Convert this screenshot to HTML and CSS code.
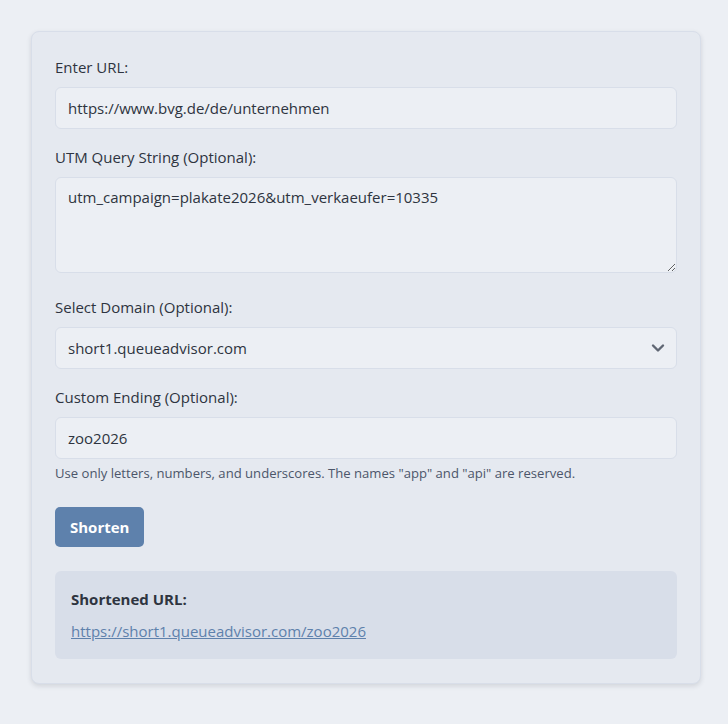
FILE: index.html
```html
<!DOCTYPE html>
<html lang="en">
<head>
<meta charset="utf-8">
<title>URL Shortener</title>
<link rel="stylesheet" href="styles.css">
</head>
<body>
<main class="card">
  <form class="form" onsubmit="return false">
    <label class="label" for="url">Enter URL:</label>
    <input class="field" id="url" type="text" value="https://www.bvg.de/de/unternehmen">

    <label class="label" for="utm">UTM Query String (Optional):</label>
    <textarea class="field area" id="utm">utm_campaign=plakate2026&amp;utm_verkaeufer=10335</textarea>

    <label class="label" for="domain">Select Domain (Optional):</label>
    <div class="select-wrap">
      <select class="field select" id="domain">
        <option>short1.queueadvisor.com</option>
      </select>
      <svg class="chevron" width="14" height="10" viewBox="0 0 14 10" aria-hidden="true"><path d="M2 2.5 L7 7.5 L12 2.5" fill="none" stroke="#5f6673" stroke-width="2.4" stroke-linecap="round" stroke-linejoin="round"/></svg>
    </div>

    <label class="label" for="ending">Custom Ending (Optional):</label>
    <input class="field" id="ending" type="text" value="zoo2026">
    <p class="help">Use only letters, numbers, and underscores. The names "app" and "api" are reserved.</p>

    <button class="btn" type="submit">Shorten</button>
  </form>

  <section class="result">
    <p class="result-title">Shortened URL:</p>
    <a class="result-link" href="#">https://short1.queueadvisor.com/zoo2026</a>
  </section>
</main>
</body>
</html>
```
FILE: styles.css
```css
html, body {
  margin: 0;
  padding: 0;
}
body {
  background: #eceff4;
  font-family: "Open Sans", "Noto Sans", "DejaVu Sans", sans-serif;
  color: #2e3440;
  padding: 31px 27px 40px 31px;
}
.card {
  width: 670px;
  box-sizing: border-box;
  background: #e5e9f0;
  border: 1px solid #d8dee9;
  border-radius: 8px;
  box-shadow: 0 2px 5px rgba(46, 52, 64, 0.14);
  padding: 23px 23px 24px 23px;
}
.form {
  display: flex;
  flex-direction: column;
}
.label {
  display: block;
  font-size: 15px;
  line-height: 24px;
  color: #2e3440;
  margin: 0 0 8px 0;
}
.field {
  display: block;
  box-sizing: border-box;
  width: 100%;
  height: 42px;
  margin: 0 0 16px 0;
  padding: 0 12px;
  background: #eceff4;
  border: 1px solid #d8dee9;
  border-radius: 6px;
  font-family: inherit;
  font-size: 15px;
  color: #2e3440;
  outline: none;
}
.area {
  height: 96px;
  padding: 8px 12px;
  line-height: 22px;
  resize: vertical;
  margin-bottom: 22px;
}
.select-wrap {
  position: relative;
  margin: 0 0 16px 0;
}
.select {
  appearance: none;
  -webkit-appearance: none;
  margin: 0;
}
.chevron {
  position: absolute;
  right: 12px;
  top: 16px;
  pointer-events: none;
}
#ending {
  margin-bottom: 4px;
}
.help {
  margin: 0 0 24px 0;
  font-size: 13.1px;
  line-height: 20px;
  color: #4c566a;
}
.btn {
  align-self: flex-start;
  height: 40px;
  padding: 0 15px;
  background: #5e81ac;
  color: #ffffff;
  border: none;
  border-radius: 5px;
  font-family: inherit;
  font-size: 15px;
  font-weight: 700;
  cursor: pointer;
}
.result {
  margin-top: 24px;
  background: #d8dee9;
  border-radius: 6px;
  padding: 16px 16px 16px 16px;
}
.result-title {
  margin: 0 0 8px 0;
  font-size: 15px;
  line-height: 24px;
  font-weight: 700;
  color: #2e3440;
}
.result-link {
  font-size: 15px;
  line-height: 24px;
  color: #5e81ac;
  text-decoration: underline;
}
```
